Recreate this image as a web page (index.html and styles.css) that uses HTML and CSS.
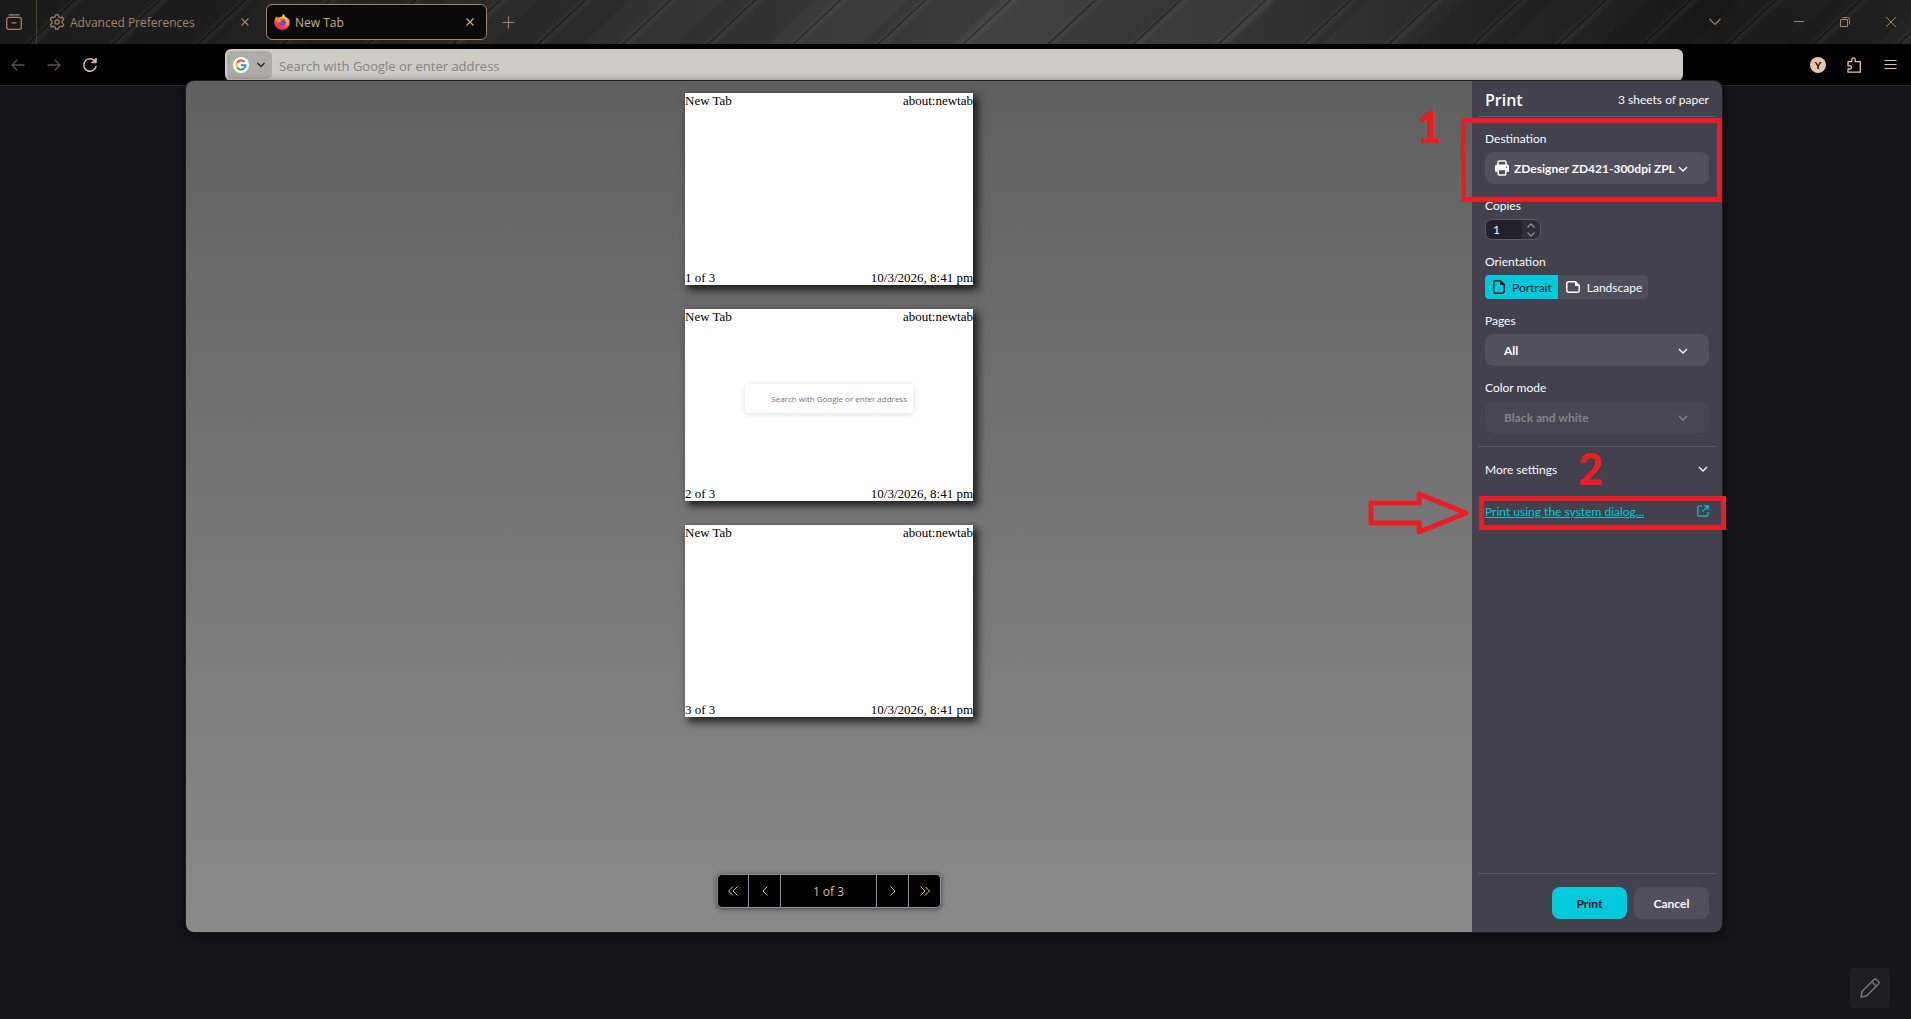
FILE: index.html
```html
<!DOCTYPE html>
<html lang="en">
<head>
    <meta charset="UTF-8">
    <meta name="viewport" content="width=device-width, initial-scale=1.0">
    <title>New Tab</title>
    <link rel="stylesheet" href="styles.css">
</head>
<body>

    <header class="tabbar">
        <button class="icon-btn view-btn" aria-label="Firefox View">
            <svg width="16" height="16" viewBox="0 0 16 16" fill="none" stroke="currentColor" stroke-width="1.3" stroke-linecap="round"><path d="M3 .9h10"/><path d="M2.700 3.400h10.600a2 2 0 0 1 2 2v7.900a2 2 0 0 1-2 2H2.700a2 2 0 0 1-2-2V5.400a2 2 0 0 1 2-2z"/><path d="M6 8.800h4"/></svg>
        </button>
        <div class="tabs">
            <div class="tab">
                <svg width="16" height="16" viewBox="0 0 16 16" fill="none" stroke="currentColor" stroke-width="1.2" stroke-linejoin="round"><path d="M6.700.8h2.600l.5 2 1.600.9 2-.6 1.300 2.300-1.500 1.500v2.200l1.500 1.500-1.300 2.300-2-.6-1.600.9-.5 2H6.700l-.5-2-1.600-.9-2 .6-1.300-2.300 1.500-1.500V6.900L1.300 5.400l1.300-2.300 2 .6 1.600-.9z"/><circle cx="8" cy="8" r="2.2"/></svg>
                <span class="tab-title">Advanced Preferences</span>
                <button class="tab-close" aria-label="Close tab"><svg width="8" height="8" viewBox="0 0 8 8" stroke="currentColor" stroke-width="1.2"><path d="M.5.5l7 7M7.500.5l-7 7"/></svg></button>
            </div>
            <div class="tab active">
                <svg width="16" height="16" viewBox="0 0 16 16">
                    <defs>
                        <linearGradient id="fox" x1=".8" y1="0" x2=".3" y2="1"><stop offset="0" stop-color="#ffe14a"/><stop offset=".45" stop-color="#ff9a1f"/><stop offset=".75" stop-color="#ff3b47"/><stop offset="1" stop-color="#e0148a"/></linearGradient>
                    </defs>
                    <path fill="url(#fox)" d="M9.200 0c1.200.8 1.700 1.700 1.900 2.700.7-.1 1.100.1 1.400.5.700.7 1.100 1.200 1.500 1.400C15.400 6 15.800 7.200 15.600 9c-.4 4-3.600 7-7.600 7S.4 12.800.4 8.600c0-2 .4-3.600 1.200-5 .1-.7.2-1 .6-1.400.1.700.4 1 .8 1.300.8-.4 1.600-.4 2.400 0 .7-.7 1.600-.9 2.400-.8C8.200 1.900 8.700 1 9.200 0z"/>
                    <circle cx="8.300" cy="8.300" r="3.500" fill="#7a3fe0"/>
                    <path fill="#ff8a1c" d="M3 4.800c1.600-.9 2.900-.6 3.900.4.700.2 1.600.2 2 .4-.3.700-1.300 1-2 1.300-.5.500-.4 1.300.4 1.700-1.500.4-2.700-.2-3.200-1.300C3.500 6.500 3.100 5.600 3 4.800z"/>
                </svg>
                <span class="tab-title">New Tab</span>
                <button class="tab-close" aria-label="Close tab"><svg width="8" height="8" viewBox="0 0 8 8" stroke="currentColor" stroke-width="1.3"><path d="M.5.5l7 7M7.500.5l-7 7"/></svg></button>
            </div>
        </div>
        <button class="icon-btn new-tab" aria-label="New tab">
            <svg width="13" height="13" viewBox="0 0 13 13" stroke="currentColor"><path d="M6.500.5v12M.5 6.500h12"/></svg>
        </button>
        <div class="window-controls">
            <button class="icon-btn all-tabs" aria-label="List all tabs"><svg width="12" height="8" viewBox="0 0 12 8" fill="none" stroke="currentColor" stroke-width="1.2"><path d="M.5 1L6 6.500 11.500 1"/></svg></button>
            <button class="icon-btn" aria-label="Minimize"><svg width="10" height="10" viewBox="0 0 10 10" stroke="currentColor"><path d="M0 4.500h10"/></svg></button>
            <button class="icon-btn" aria-label="Restore"><svg width="10" height="10" viewBox="0 0 10 10" fill="none" stroke="currentColor"><path d="M.5 2.500h7v7h-7zM2.500.5h5a2 2 0 0 1 2 2v5"/></svg></button>
            <button class="icon-btn" aria-label="Close"><svg width="10" height="10" viewBox="0 0 10 10" stroke="currentColor"><path d="M0 0l10 10M10 0L0 10"/></svg></button>
        </div>
    </header>

    <nav class="toolbar">
        <button class="icon-btn dim" aria-label="Back"><svg width="14" height="12" viewBox="0 0 14 12" fill="none" stroke="currentColor" stroke-width="1.3" stroke-linecap="round" stroke-linejoin="round"><path d="M13 6H1M6 1L1 6l5 5"/></svg></button>
        <button class="icon-btn dim" aria-label="Forward"><svg width="14" height="12" viewBox="0 0 14 12" fill="none" stroke="currentColor" stroke-width="1.3" stroke-linecap="round" stroke-linejoin="round"><path d="M1 6h12M8 1l5 5-5 5"/></svg></button>
        <button class="icon-btn" aria-label="Reload"><svg width="16" height="16" viewBox="0 0 16 16" fill="none" stroke="currentColor" stroke-width="1.4" stroke-linecap="round"><path d="M14 9.500A6.200 6.200 0 1 1 12 3.300"/><path d="M14.300 1.300v4.500H9.800z" fill="currentColor" stroke-linejoin="round" stroke-width=".8"/></svg></button>
        <div class="urlbar">
            <button class="engine" aria-label="Search engine">
                <svg width="16" height="16" viewBox="0 0 16 16" fill="none"><circle cx="8" cy="8" r="8" fill="#fff"/><g stroke-width="2"><path stroke="#ea4335" d="M4.100 5.700A4.500 4.500 0 0 1 11.300 4.900"/><path stroke="#fbbc05" d="M4.200 10.400a4.500 4.500 0 0 1-.1-4.700"/><path stroke="#34a853" d="M11.200 11.300a4.500 4.500 0 0 1-7-.9"/><path stroke="#4285f4" d="M8 8.200h4.500a4.500 4.500 0 0 1-1.300 3.100"/></g></svg>
                <svg width="8" height="6" viewBox="0 0 8 6" fill="none" stroke="currentColor" stroke-width="1.3"><path d="M.5 1L4 4.500 7.500 1"/></svg>
            </button>
            <input class="url-input" type="text" aria-label="Address" placeholder="Search with Google or enter address">
        </div>
        <div class="toolbar-end">
            <button class="icon-btn" aria-label="Account"><span class="avatar">Y</span></button>
            <button class="icon-btn" aria-label="Extensions"><svg width="16" height="16" viewBox="0 0 16 16" fill="none" stroke="currentColor" stroke-width="1.3" stroke-linejoin="round"><path d="M2 7.500V4.700h3.800V2.600a1.700 1.700 0 0 1 3.400 0v2.100h5.100v10.500H2v-3.200h1.900a1.600 1.600 0 0 0 0-3.200H2z"/></svg></button>
            <button class="icon-btn" aria-label="Menu"><svg width="13" height="11" viewBox="0 0 13 11" stroke="currentColor"><path d="M.5 1.500h12M.5 5.500h12M.5 9.500h12"/></svg></button>
        </div>
    </nav>

    <main class="content">
        <div class="dialog">
            <section class="preview">
                <div class="sheets">
                    <article class="sheet">
                        <div class="sheet-line"><span>New Tab</span><span>about:newtab</span></div>
                        <div class="sheet-line"><span>1 of 3</span><span>10/3/2026, 8:41 pm</span></div>
                    </article>
                    <article class="sheet">
                        <div class="sheet-line"><span>New Tab</span><span>about:newtab</span></div>
                        <div class="sheet-search">Search with Google or enter address</div>
                        <div class="sheet-line"><span>2 of 3</span><span>10/3/2026, 8:41 pm</span></div>
                    </article>
                    <article class="sheet">
                        <div class="sheet-line"><span>New Tab</span><span>about:newtab</span></div>
                        <div class="sheet-line"><span>3 of 3</span><span>10/3/2026, 8:41 pm</span></div>
                    </article>
                </div>
                <div class="pager">
                    <button aria-label="First page"><svg width="10" height="10" viewBox="0 0 10 10" fill="none" stroke="currentColor"><path d="M5 .5L.5 5 5 9.500M9.500.5L5 5l4.500 4.500"/></svg></button>
                    <button aria-label="Previous page"><svg width="10" height="10" viewBox="0 0 10 10" fill="none" stroke="currentColor"><path d="M7.500.5L3 5l4.500 4.500"/></svg></button>
                    <span class="pager-text">1 of 3</span>
                    <button aria-label="Next page"><svg width="10" height="10" viewBox="0 0 10 10" fill="none" stroke="currentColor"><path d="M2.500.5L7 5 2.500 9.500"/></svg></button>
                    <button aria-label="Last page"><svg width="10" height="10" viewBox="0 0 10 10" fill="none" stroke="currentColor"><path d="M.5.5L5 5 .5 9.500M5 .5L9.500 5 5 9.500"/></svg></button>
                </div>
            </section>

            <form class="settings">
                <div class="settings-head">
                    <h1>Print</h1>
                    <span>3 sheets of paper</span>
                </div>

                <div class="settings-body">
                    <div class="field">
                        <label for="destination">Destination</label>
                        <div class="select-wrap">
                            <svg class="printer" width="14" height="16" viewBox="0 0 14 16"><path d="M3 5V2.200A1.200 1.200 0 0 1 4.200 1h5.600A1.200 1.200 0 0 1 11 2.200V5" fill="none" stroke="currentColor" stroke-width="1.5"/><path fill="currentColor" d="M2 4.500h10a2 2 0 0 1 2 2V11a1 1 0 0 1-1 1h-1.500V9.500h-9V12H1a1 1 0 0 1-1-1V6.500a2 2 0 0 1 2-2z"/><path d="M3.200 9.500h7.600v4.300a1.200 1.200 0 0 1-1.200 1.200H4.400a1.200 1.200 0 0 1-1.200-1.200z" fill="none" stroke="currentColor" stroke-width="1.5"/><circle cx="11.500" cy="7" r=".8" fill="#52505e"/></svg>
                            <select id="destination" class="with-icon"><option>ZDesigner ZD421-300dpi ZPL</option></select>
                            <svg class="chevron" width="10" height="6" viewBox="0 0 10 6" fill="none" stroke="currentColor" stroke-width="1.3"><path d="M1 1l4 4 4-4"/></svg>
                        </div>
                    </div>

                    <div class="field">
                        <label for="copies">Copies</label>
                        <div class="number-wrap">
                            <input id="copies" type="number" value="1" min="1">
                            <svg class="spin" width="8" height="14" viewBox="0 0 8 14" fill="none" stroke="currentColor" stroke-width="1.3"><path d="M.5 4.500L4 1l3.500 3.500M.5 9.500L4 13l3.500-3.500"/></svg>
                        </div>
                    </div>

                    <fieldset class="field">
                        <legend>Orientation</legend>
                        <div class="toggle">
                            <input type="radio" name="orientation" id="portrait" checked>
                            <label for="portrait"><svg width="12" height="14" viewBox="0 0 12 14"><path d="M2.500.8H7.500L11.200 4.500v7a1.700 1.700 0 0 1-1.700 1.700h-7A1.700 1.700 0 0 1 .8 11.500v-9A1.700 1.700 0 0 1 2.500.8z" fill="none" stroke="currentColor" stroke-width="1.5"/><path d="M7 .8v4.200h4.200z" fill="currentColor"/></svg>Portrait</label>
                            <input type="radio" name="orientation" id="landscape">
                            <label for="landscape"><svg width="14" height="12" viewBox="0 0 14 12"><path d="M2.500.8H9.500L13.200 4.500v5a1.700 1.700 0 0 1-1.700 1.700h-9A1.700 1.700 0 0 1 .8 9.500v-7A1.700 1.700 0 0 1 2.500.8z" fill="none" stroke="currentColor" stroke-width="1.5"/><path d="M9 .8v4.200h4.200z" fill="currentColor"/></svg>Landscape</label>
                        </div>
                    </fieldset>

                    <div class="field">
                        <label for="pages">Pages</label>
                        <div class="select-wrap">
                            <select id="pages"><option>All</option></select>
                            <svg class="chevron" width="10" height="6" viewBox="0 0 10 6" fill="none" stroke="currentColor" stroke-width="1.3"><path d="M1 1l4 4 4-4"/></svg>
                        </div>
                    </div>

                    <div class="field">
                        <label for="color-mode">Color mode</label>
                        <div class="select-wrap disabled">
                            <select id="color-mode" disabled><option>Black and white</option></select>
                            <svg class="chevron" width="10" height="6" viewBox="0 0 10 6" fill="none" stroke="currentColor" stroke-width="1.3"><path d="M1 1l4 4 4-4"/></svg>
                        </div>
                    </div>
                </div>

                <button type="button" class="more">More settings
                    <svg width="10" height="6" viewBox="0 0 10 6" fill="none" stroke="currentColor" stroke-width="1.3"><path d="M1 1l4 4 4-4"/></svg>
                </button>
                <a class="system-link" href="#"><span>Print using the system dialog...</span>
                    <svg width="12" height="12" viewBox="0 0 12 12" fill="none" stroke="currentColor" stroke-width="1.2"><path d="M5 1H2a1.200 1.200 0 0 0-1.200 1.200V10A1.200 1.200 0 0 0 2 11.200h7.800A1.200 1.200 0 0 0 11 10V7M7 .8h4.200V5M11 1L5.500 6.500"/></svg>
                </a>

                <div class="actions">
                    <button type="submit" class="primary">Print</button>
                    <button type="button">Cancel</button>
                </div>
            </form>

            <!-- step markers drawn over the dialog -->
            <div class="mark-box mark-destination"></div>
            <div class="mark-box mark-link"></div>
            <span class="mark-num mark-one">1</span>
            <span class="mark-num mark-two">2</span>
            <svg class="mark-arrow" width="102" height="44" viewBox="0 0 102 44" fill="none" stroke="#ed1c24" stroke-width="5" stroke-linejoin="round"><path d="M3 12h48V3l47 19-47 19v-9H3z"/></svg>
        </div>

        <button class="edit-btn" aria-label="Customize"><svg width="20" height="20" viewBox="0 0 20 20" fill="none" stroke="currentColor" stroke-width="1.5" stroke-linejoin="round"><path d="M1 19l1-5.500L13.800 1.700a2 2 0 0 1 2.800 0l1.700 1.700a2 2 0 0 1 0 2.800L6.500 18zM11.800 3.700l4.500 4.500"/></svg></button>
    </main>

</body>
</html>
```
FILE: styles.css
```css
* {
    box-sizing: border-box;
}
body {
    margin: 0;
    min-height: 100vh;
    display: flex;
    flex-direction: column;
    background: #15141a;
    color: #fbfbfe;
    font-family: Lato, "Open Sans", sans-serif;
    font-size: 12px;
}
button, input, select {
    font: inherit;
    color: inherit;
    border: none;
    margin: 0;
    padding: 0;
    background: none;
}
svg {
    display: block;
    flex: none;
}
.icon-btn {
    width: 36px;
    height: 32px;
    display: flex;
    align-items: center;
    justify-content: center;
}

/* tab strip */
.tabbar {
    height: 44px;
    display: flex;
    align-items: center;
    color: #a18468;
    background:
        repeating-linear-gradient(137deg, transparent 0 46px, #ffffff08 49px 50px, #00000050 51px, #ffffff0d 53px, #ffffff05 57px, transparent 58px),
        repeating-linear-gradient(137deg, #0000001a 0 51px, transparent 53px 114px, #0000001a 116px 126px),
        linear-gradient(90deg, #1c1c1c, #222 15%, #2c2c2c 27%, #363636 38%, #414141 52%, #383838 66%, #262626 78%, #1a1a1a 90%, #242424);
}
.view-btn {
    width: 37px;
    height: 44px;
    padding-right: 8px;
    border-right: 1px solid #4a4033;
}
.tabs {
    display: flex;
    gap: 4px;
    padding-left: 4px;
}
.tab {
    width: 221px;
    height: 36px;
    display: flex;
    align-items: center;
    gap: 5px;
    padding: 0 12px 0 7px;
    border: 1px solid transparent;
    border-radius: 6px;
    font-family: "Open Sans", sans-serif;
}
.tab.active {
    background: #0a0a0a;
    border-color: #a18468;
    color: #c9ab8b;
}
.tab-title {
    flex: 1;
    white-space: nowrap;
}
.new-tab {
    margin-left: 3px;
}
.window-controls {
    display: flex;
    margin-left: auto;
}
.window-controls .icon-btn {
    width: 46px;
    padding-left: 6px;
}
.window-controls .all-tabs {
    margin-right: 38px;
}

/* navigation bar */
.toolbar {
    height: 42px;
    display: flex;
    align-items: center;
    background: #000;
    border-bottom: 1px solid #2b2621;
    color: #e6c5a4;
}
.dim {
    color: #5c4f42;
}
.urlbar {
    flex: 1;
    height: 32px;
    margin-left: 117px;
    padding: 2px;
    display: flex;
    gap: 7px;
    background: #cdccc6;
    border-radius: 6px;
}
.engine {
    width: 45px;
    display: flex;
    align-items: center;
    gap: 8px;
    padding-left: 6px;
    border-radius: 5px;
    background: #adaca6;
    color: #222;
}
.url-input {
    flex: 1;
    padding-top: 2px;
    font-family: "Open Sans", sans-serif;
    font-size: 13px;
    outline: none;
}
.url-input::placeholder {
    color: #85847f;
    opacity: 1;
}
.toolbar-end {
    display: flex;
    margin-left: 117px;
    padding-right: 3px;
}
.avatar {
    width: 16px;
    height: 16px;
    border-radius: 50%;
    background: #e6c5a4;
    color: #000;
    font-size: 10px;
    font-weight: 700;
    line-height: 16px;
}

/* print dialog */
.content {
    flex: 1;
    display: flex;
    flex-direction: column;
    padding: 0 189px 0 186px;
}
.dialog {
    position: relative;
    display: flex;
    min-height: 851px;
    margin-top: -5px;
    border-radius: 8px;
    box-shadow: 0 2px 10px #000a, 0 0 0 1px #2b2726;
}
.preview {
    flex: 1;
    display: flex;
    flex-direction: column;
    align-items: center;
    justify-content: space-between;
    padding: 12px 0 24px;
    background: linear-gradient(#606060, #8a8a8a);
    border-radius: 8px 0 0 8px;
}
.sheets {
    display: flex;
    flex-direction: column;
    gap: 24px;
}
.sheet {
    width: 288px;
    height: 192px;
    display: flex;
    flex-direction: column;
    justify-content: space-between;
    align-items: center;
    background: #fff;
    color: #000;
    font: 13px/15px "Liberation Serif", serif;
    box-shadow: 4px 4px 8px 1px #000b;
}
.sheet-line {
    width: 100%;
    display: flex;
    justify-content: space-between;
}
.sheet-search {
    width: 168px;
    height: 29px;
    margin-bottom: 13px;
    padding-right: 6px;
    border-radius: 4px;
    box-shadow: 0 1px 6px #0002;
    color: #777;
    font: 8px/30px "Open Sans", sans-serif;
    text-align: right;
}
.pager {
    display: flex;
    height: 34px;
    border: 1px solid #8f8d9c;
    border-radius: 5px;
    background: #000;
    color: #d9bb9b;
    box-shadow: 0 1px 5px #0008;
}
.pager button {
    width: 32px;
    display: flex;
    align-items: center;
    justify-content: center;
}
.pager button:first-child {
    width: 30px;
}
.pager > * + * {
    border-left: 1px solid #8f8d9c;
}
.pager-text {
    width: 96px;
    font-family: "Open Sans", sans-serif;
    line-height: 34px;
    text-align: center;
}

/* settings column */
.settings {
    width: 250px;
    display: flex;
    flex-direction: column;
    padding: 0 6px;
    background: #42414d;
    border-radius: 0 8px 8px 0;
}
.settings-head {
    height: 36px;
    display: flex;
    align-items: center;
    justify-content: space-between;
    padding: 2px 7px 0;
    border-bottom: 1px solid #5b5a66;
}
.settings-head h1 {
    margin: 0;
    font: 600 16px "Open Sans", sans-serif;
}
.settings-body {
    display: flex;
    flex-direction: column;
    gap: 14px;
    padding: 14px 7px 13px;
    border-bottom: 1px solid #5b5a66;
}
.field {
    display: flex;
    flex-direction: column;
    gap: 5px;
    margin: 0;
    padding: 0;
    border: none;
}
.field > label, .field > legend {
    padding: 0;
    line-height: 16px;
}
.field > legend {
    margin-bottom: 5px;
}
.select-wrap {
    position: relative;
}
.select-wrap select {
    appearance: none;
    width: 100%;
    height: 32px;
    padding-left: 19px;
    border-radius: 8px;
    background: #52505c;
    font-weight: 700;
}
.select-wrap .with-icon {
    padding-left: 29px;
}
.select-wrap select:disabled {
    color: inherit;
    opacity: 1;
    background: #474652;
}
.disabled {
    color: #85848d;
}
.printer {
    position: absolute;
    left: 10px;
    top: 8px;
}
.chevron {
    position: absolute;
    right: 21px;
    top: 14px;
}
.number-wrap {
    position: relative;
    width: 56px;
}
.number-wrap input {
    display: block;
    appearance: textfield;
    width: 100%;
    height: 21px;
    padding-left: 7px;
    border: 1px solid #5b5a66;
    border-radius: 7px;
    background: linear-gradient(90deg, #23222b 36px, #2f2e38 36px);
}
.number-wrap input::-webkit-inner-spin-button {
    appearance: none;
}
.spin {
    position: absolute;
    right: 6px;
    top: 4px;
    color: #8f8e99;
}
.toggle {
    display: flex;
}
.toggle input {
    appearance: none;
    position: absolute;
}
.toggle label {
    height: 24px;
    display: flex;
    align-items: center;
    gap: 7px;
    padding: 0 6px 0 8px;
    background: #4f4e5a;
    border-radius: 0 4px 4px 0;
}
.toggle input:checked + label {
    background: #00cadb;
    color: #15141a;
    border-radius: 4px 0 0 4px;
}
.more {
    height: 44px;
    display: flex;
    align-items: center;
    justify-content: space-between;
    padding: 0 8px 0 7px;
}
.system-link {
    display: flex;
    align-items: center;
    justify-content: space-between;
    height: 40px;
    padding: 0 7px;
    color: #00cadb;
}
.actions {
    display: flex;
    justify-content: flex-end;
    gap: 7px;
    margin-top: auto;
    padding: 13px 7px;
    border-top: 1px solid #5b5a66;
}
.actions button {
    width: 75px;
    height: 32px;
    border-radius: 8px;
    background: #52505c;
    font-weight: 700;
}
.actions .primary {
    background: #00cadb;
    color: #15141a;
}

/* annotations */
.mark-box {
    position: absolute;
    border: 5px solid #ed1c24;
}
.mark-destination {
    top: 37px;
    right: 0;
    width: 261px;
    height: 84px;
}
.mark-link {
    top: 415px;
    right: -4px;
    width: 247px;
    height: 34px;
}
.mark-num {
    position: absolute;
    color: #ed1c24;
    font: 900 43px/43px Lato, sans-serif;
}
.mark-one {
    top: 24px;
    right: 280px;
}
.mark-two {
    top: 366px;
    right: 119px;
}
.mark-arrow {
    position: absolute;
    top: 410px;
    right: 252px;
}
.edit-btn {
    position: absolute;
    right: 21px;
    bottom: 11px;
    width: 40px;
    height: 40px;
    display: flex;
    align-items: center;
    justify-content: center;
    border-radius: 4px;
    background: #1e1d23;
    color: #77767a;
}
```
